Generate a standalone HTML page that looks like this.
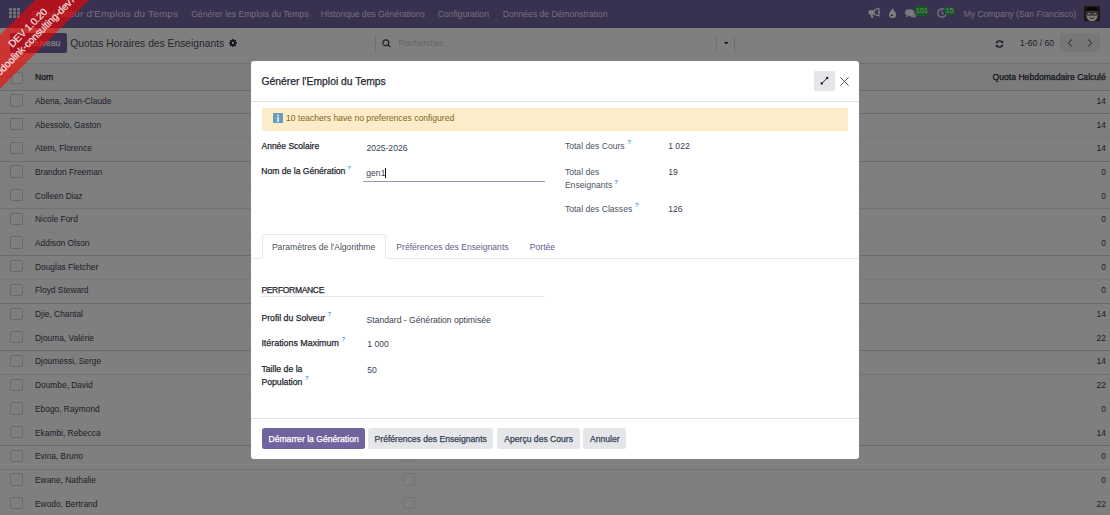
<!DOCTYPE html>
<html><head><meta charset="utf-8">
<style>
*{box-sizing:border-box;margin:0;padding:0}
html,body{width:1110px;height:515px;overflow:hidden;background:#fff}
body{font-family:"Liberation Sans",sans-serif;position:relative}
.t{position:absolute;white-space:nowrap}
.r{position:absolute}
</style></head><body>
<div class="r" style="left:0px;top:0px;width:1110.00px;height:28.00px;background:#71639e"></div>
<svg class="r" style="left:9px;top:7.8px" width="11" height="10.4" viewBox="0 0 11 10.4"><g fill="#ffffff" opacity=".85"><rect x="0" y="0.0" width="3" height="2.8" rx="0.4"/><rect x="4" y="0.0" width="3" height="2.8" rx="0.4"/><rect x="8" y="0.0" width="3" height="2.8" rx="0.4"/><rect x="0" y="3.6" width="3" height="2.8" rx="0.4"/><rect x="4" y="3.6" width="3" height="2.8" rx="0.4"/><rect x="8" y="3.6" width="3" height="2.8" rx="0.4"/><rect x="0" y="7.2" width="3" height="2.8" rx="0.4"/><rect x="4" y="7.2" width="3" height="2.8" rx="0.4"/><rect x="8" y="7.2" width="3" height="2.8" rx="0.4"/></g></svg>
<div class="t " style="left:31.50px;top:7.72px;font-size:9.8px;line-height:11.76px;color:#e4def2;letter-spacing:.25px">Générateur d'Emplois du Temps</div>
<div class="t " style="left:191.20px;top:8.66px;font-size:8.6px;line-height:10.32px;color:#e4def2;">Générer les Emplois du Temps</div>
<div class="t " style="left:320.80px;top:8.66px;font-size:8.6px;line-height:10.32px;color:#e4def2;">Historique des Générations</div>
<div class="t " style="left:437.80px;top:8.66px;font-size:8.6px;line-height:10.32px;color:#e4def2;">Configuration</div>
<div class="t " style="left:502.80px;top:8.66px;font-size:8.6px;line-height:10.32px;color:#e4def2;">Données de Démonstration</div>
<div class="t " style="left:963.70px;top:8.65px;font-size:8.5px;line-height:10.2px;color:#e4def2;">My Company (San Francisco)</div>
<svg class="r" style="left:867px;top:6px" width="14" height="14" viewBox="0 0 14 14"><rect x="1.6" y="4.2" width="5.2" height="4.4" rx=".6" fill="#fff"/><path d="M7.2 4.3L11.9 2.2V9.9L7.2 8.5z" fill="none" stroke="#fff" stroke-width="1.2" stroke-linejoin="round"/><path d="M3.4 8.4L4.4 12.1H6.2L5.6 8.4z" fill="#fff"/><circle cx="12.4" cy="6.3" r=".8" fill="#fff"/></svg>
<svg class="r" style="left:889.2px;top:7.9px" width="7.2" height="10.2" viewBox="0 0 7.2 10.2"><path d="M3.6 0C2.6 2.6 0 4.6 0 6.6A3.6 3.6 0 0 0 7.2 6.6C7.2 4.6 4.6 2.6 3.6 0z" fill="#fff"/><ellipse cx="2.9" cy="7.4" rx="1.1" ry=".8" fill="#3a3152"/></svg>
<svg class="r" style="left:905px;top:9px" width="12" height="9" viewBox="0 0 12 9"><ellipse cx="4.5" cy="3.5" rx="4.5" ry="3.3" fill="#fff" opacity=".9"/><path d="M1.5 6l-1 2.5 3-1.5z" fill="#fff" opacity=".9"/><ellipse cx="8" cy="5.5" rx="3.8" ry="2.8" fill="#fff" opacity=".75"/><path d="M10 7.5l1.5 1.5-3.5-.8z" fill="#fff" opacity=".75"/></svg>
<svg class="r" style="left:937px;top:8px" width="10" height="10" viewBox="0 0 10 10"><circle cx="5" cy="5" r="4.2" fill="none" stroke="#fff" stroke-width="1.2" opacity=".9"/><path d="M5 2.5V5.3L6.8 6.3" fill="none" stroke="#fff" stroke-width="1.1" opacity=".9"/></svg>
<div class="r" style="left:914px;top:6px;width:14.50px;height:9.80px;background:#2db04a;border-radius:5px"></div>
<div class="t " style="left:915.70px;top:7.19px;font-size:7.2px;line-height:8.64px;color:#fff;">101</div>
<div class="r" style="left:943.8px;top:6.8px;width:11.20px;height:8.10px;background:#2db04a;border-radius:4px"></div>
<div class="t " style="left:945.50px;top:6.69px;font-size:7.2px;line-height:8.64px;color:#fff;">15</div>
<svg class="r" style="left:1084px;top:6.3px" width="16" height="15.3" viewBox="0 0 16 15.3"><rect width="16" height="15.3" fill="#3a2a30"/><path d="M2 5.5Q1.8 15.3 8 15.3Q14.2 15.3 14 5.5z" fill="#fffbe6"/><path d="M2 6Q1.5 1 8 1.3Q14.5 1 14 6L12.5 4.6L3.5 4.6z" fill="#120c0c"/><rect x="3" y="6.2" width="4.2" height="2.8" fill="none" stroke="#1a1414" stroke-width=".9"/><rect x="8.8" y="6.2" width="4.2" height="2.8" fill="none" stroke="#1a1414" stroke-width=".9"/><path d="M5.5 11.8Q8 13.3 10.5 11.8" stroke="#4a3028" stroke-width=".8" fill="none"/></svg>
<div class="r" style="left:0px;top:28px;width:1110.00px;height:35.00px;background:#fff"></div>
<div class="r" style="left:10px;top:33px;width:57.00px;height:20.20px;background:#71639e;border-radius:2.5px"></div>
<div class="t " style="right:1049.80px;top:37.56px;font-size:8.6px;line-height:10.32px;-webkit-text-stroke:0.25px #fff;color:#fff;">Nouveau</div>
<div class="t " style="left:70.30px;top:37.65px;font-size:10.3px;line-height:12.36px;color:#4a4f57;">Quotas Horaires des Enseignants</div>
<svg class="r" style="left:229.2px;top:38.6px" width="8" height="8" viewBox="0 0 8 8"><g fill="#1f2937"><rect x="3.25" y="-.1" width="1.5" height="8.2" rx=".3" transform="rotate(0 4 4)"/><rect x="3.25" y="-.1" width="1.5" height="8.2" rx=".3" transform="rotate(45 4 4)"/><rect x="3.25" y="-.1" width="1.5" height="8.2" rx=".3" transform="rotate(90 4 4)"/><rect x="3.25" y="-.1" width="1.5" height="8.2" rx=".3" transform="rotate(135 4 4)"/><circle cx="4" cy="4" r="2.9"/></g><circle cx="4" cy="4" r="1.15" fill="#fff"/></svg>
<div class="r" style="left:375px;top:35.5px;width:360.00px;height:18.00px;border:1px solid #f5f6f7;border-left-color:#dcdee1;border-right-color:#dcdee1;border-radius:1px;background:#fff"></div>
<svg class="r" style="left:381.5px;top:39.2px" width="9.5" height="8.5" viewBox="0 0 10 9"><circle cx="4" cy="4" r="3.1" fill="none" stroke="#374151" stroke-width="1.3"/><path d="M6.2 6.2L8.8 8.6" stroke="#374151" stroke-width="1.4"/></svg>
<div class="t " style="left:398.50px;top:37.86px;font-size:8.6px;line-height:10.32px;color:#c6c9cd;">Rechercher...</div>
<div class="r" style="left:716.3px;top:36px;width:1.00px;height:17.00px;background:#e3e5e8"></div>
<svg class="r" style="left:723.8px;top:41.6px" width="4.4" height="2.6" viewBox="0 0 4.4 2.6"><path d="M0 0h4.4L2.2 2.6z" fill="#1f2937"/></svg>
<svg class="r" style="left:994.5px;top:39.5px" width="9" height="8" viewBox="0 0 9 8"><path d="M1.3 3.6A3.3 3.3 0 0 1 7.2 2.2" fill="none" stroke="#374151" stroke-width="1.4"/><path d="M8.2 .2v2.8H5.4z" fill="#374151"/><path d="M7.7 4.4A3.3 3.3 0 0 1 1.8 5.8" fill="none" stroke="#374151" stroke-width="1.4"/><path d="M.8 7.8V5h2.8z" fill="#374151"/></svg>
<div class="t " style="left:1020.10px;top:37.66px;font-size:8.6px;line-height:10.32px;color:#374151;">1-60 / 60</div>
<div class="r" style="left:1060px;top:32.7px;width:40.00px;height:19.60px;background:#eceef1;border-radius:2px"></div>
<svg class="r" style="left:1066.5px;top:38.5px" width="6" height="8" viewBox="0 0 6 8"><path d="M5 .5L1.3 4 5 7.5" fill="none" stroke="#374151" stroke-width="1"/></svg>
<svg class="r" style="left:1087px;top:38.5px" width="6" height="8" viewBox="0 0 6 8"><path d="M1 .5L4.7 4 1 7.5" fill="none" stroke="#374151" stroke-width="1"/></svg>
<div class="r" style="left:0px;top:63px;width:1110.00px;height:26.50px;background:rgba(0,0,0,.025)"></div>
<div class="r" style="left:0px;top:62.5px;width:1110.00px;height:1.00px;background:rgba(0,0,0,.08)"></div>
<div class="r" style="left:0px;top:89.5px;width:1110.00px;height:1.00px;background:rgba(0,0,0,.17)"></div>
<div class="r" style="left:10.5px;top:72.2px;width:12.30px;height:12.30px;border:1px solid #ced4da;border-radius:2px;background:#fff"></div>
<div class="t " style="left:35.00px;top:71.66px;font-size:8.6px;line-height:10.32px;-webkit-text-stroke:0.25px #1f2937;color:#1f2937;">Nom</div>
<div class="t " style="right:4.20px;top:71.66px;font-size:8.6px;line-height:10.32px;-webkit-text-stroke:0.25px #1f2937;color:#1f2937;">Quota Hebdomadaire Calculé</div>
<div class="r" style="left:0px;top:113.19px;width:1110.00px;height:1.00px;background:rgba(0,0,0,0.153)"></div>
<div class="r" style="left:10.3px;top:94.3px;width:12.30px;height:12.30px;border:1px solid #ced4da;border-radius:2px;background:#fff"></div>
<div class="r" style="left:402.5px;top:94.3px;width:12.30px;height:12.30px;border:1px solid #e3e5e8;border-radius:2px;background:#fff"></div>
<div class="t " style="left:35.00px;top:95.85px;font-size:8.4px;line-height:10.08px;color:#374151;">Abena, Jean-Claude</div>
<div class="t " style="right:4.20px;top:95.85px;font-size:8.4px;line-height:10.08px;color:#374151;">14</div>
<div class="r" style="left:0px;top:136.88px;width:1110.00px;height:1.00px;background:rgba(0,0,0,0.059)"></div>
<div class="r" style="left:10.3px;top:117.99px;width:12.30px;height:12.30px;border:1px solid #ced4da;border-radius:2px;background:#fff"></div>
<div class="r" style="left:402.5px;top:117.99px;width:12.30px;height:12.30px;border:1px solid #e3e5e8;border-radius:2px;background:#fff"></div>
<div class="t " style="left:35.00px;top:119.54px;font-size:8.4px;line-height:10.08px;color:#374151;">Abessolo, Gaston</div>
<div class="t " style="right:4.20px;top:119.54px;font-size:8.4px;line-height:10.08px;color:#374151;">14</div>
<div class="r" style="left:0px;top:160.57px;width:1110.00px;height:1.00px;background:rgba(0,0,0,0.153)"></div>
<div class="r" style="left:10.3px;top:141.68px;width:12.30px;height:12.30px;border:1px solid #ced4da;border-radius:2px;background:#fff"></div>
<div class="r" style="left:402.5px;top:141.68px;width:12.30px;height:12.30px;border:1px solid #e3e5e8;border-radius:2px;background:#fff"></div>
<div class="t " style="left:35.00px;top:143.23px;font-size:8.4px;line-height:10.08px;color:#374151;">Atem, Florence</div>
<div class="t " style="right:4.20px;top:143.23px;font-size:8.4px;line-height:10.08px;color:#374151;">14</div>
<div class="r" style="left:0px;top:184.26px;width:1110.00px;height:1.00px;background:rgba(0,0,0,0.026)"></div>
<div class="r" style="left:10.3px;top:165.37px;width:12.30px;height:12.30px;border:1px solid #ced4da;border-radius:2px;background:#fff"></div>
<div class="r" style="left:402.5px;top:165.37px;width:12.30px;height:12.30px;border:1px solid #e3e5e8;border-radius:2px;background:#fff"></div>
<div class="t " style="left:35.00px;top:166.92px;font-size:8.4px;line-height:10.08px;color:#374151;">Brandon Freeman</div>
<div class="t " style="right:4.20px;top:166.92px;font-size:8.4px;line-height:10.08px;color:#374151;">0</div>
<div class="r" style="left:0px;top:207.95px;width:1110.00px;height:1.00px;background:rgba(0,0,0,0.102)"></div>
<div class="r" style="left:10.3px;top:189.06px;width:12.30px;height:12.30px;border:1px solid #ced4da;border-radius:2px;background:#fff"></div>
<div class="r" style="left:402.5px;top:189.06px;width:12.30px;height:12.30px;border:1px solid #e3e5e8;border-radius:2px;background:#fff"></div>
<div class="t " style="left:35.00px;top:190.61px;font-size:8.4px;line-height:10.08px;color:#374151;">Colleen Diaz</div>
<div class="t " style="right:4.20px;top:190.61px;font-size:8.4px;line-height:10.08px;color:#374151;">0</div>
<div class="r" style="left:0px;top:231.64px;width:1110.00px;height:1.00px;background:rgba(0,0,0,0.026)"></div>
<div class="r" style="left:10.3px;top:212.75px;width:12.30px;height:12.30px;border:1px solid #ced4da;border-radius:2px;background:#fff"></div>
<div class="r" style="left:402.5px;top:212.75px;width:12.30px;height:12.30px;border:1px solid #e3e5e8;border-radius:2px;background:#fff"></div>
<div class="t " style="left:35.00px;top:214.30px;font-size:8.4px;line-height:10.08px;color:#374151;">Nicole Ford</div>
<div class="t " style="right:4.20px;top:214.30px;font-size:8.4px;line-height:10.08px;color:#374151;">0</div>
<div class="r" style="left:0px;top:255.33px;width:1110.00px;height:1.00px;background:rgba(0,0,0,0.153)"></div>
<div class="r" style="left:10.3px;top:236.44px;width:12.30px;height:12.30px;border:1px solid #ced4da;border-radius:2px;background:#fff"></div>
<div class="r" style="left:402.5px;top:236.44px;width:12.30px;height:12.30px;border:1px solid #e3e5e8;border-radius:2px;background:#fff"></div>
<div class="t " style="left:35.00px;top:237.99px;font-size:8.4px;line-height:10.08px;color:#374151;">Addison Olson</div>
<div class="t " style="right:4.20px;top:237.99px;font-size:8.4px;line-height:10.08px;color:#374151;">0</div>
<div class="r" style="left:0px;top:279.02px;width:1110.00px;height:1.00px;background:rgba(0,0,0,0.051)"></div>
<div class="r" style="left:10.3px;top:260.13px;width:12.30px;height:12.30px;border:1px solid #ced4da;border-radius:2px;background:#fff"></div>
<div class="r" style="left:402.5px;top:260.13px;width:12.30px;height:12.30px;border:1px solid #e3e5e8;border-radius:2px;background:#fff"></div>
<div class="t " style="left:35.00px;top:261.68px;font-size:8.4px;line-height:10.08px;color:#374151;">Douglas Fletcher</div>
<div class="t " style="right:4.20px;top:261.68px;font-size:8.4px;line-height:10.08px;color:#374151;">0</div>
<div class="r" style="left:0px;top:302.71px;width:1110.00px;height:1.00px;background:rgba(0,0,0,0.170)"></div>
<div class="r" style="left:10.3px;top:283.82px;width:12.30px;height:12.30px;border:1px solid #ced4da;border-radius:2px;background:#fff"></div>
<div class="r" style="left:402.5px;top:283.82px;width:12.30px;height:12.30px;border:1px solid #e3e5e8;border-radius:2px;background:#fff"></div>
<div class="t " style="left:35.00px;top:285.37px;font-size:8.4px;line-height:10.08px;color:#374151;">Floyd Steward</div>
<div class="t " style="right:4.20px;top:285.37px;font-size:8.4px;line-height:10.08px;color:#374151;">0</div>
<div class="r" style="left:0px;top:326.4px;width:1110.00px;height:1.00px;background:rgba(0,0,0,0.026)"></div>
<div class="r" style="left:10.3px;top:307.51px;width:12.30px;height:12.30px;border:1px solid #ced4da;border-radius:2px;background:#fff"></div>
<div class="r" style="left:402.5px;top:307.51px;width:12.30px;height:12.30px;border:1px solid #e3e5e8;border-radius:2px;background:#fff"></div>
<div class="t " style="left:35.00px;top:309.06px;font-size:8.4px;line-height:10.08px;color:#374151;">Djie, Chantal</div>
<div class="t " style="right:4.20px;top:309.06px;font-size:8.4px;line-height:10.08px;color:#374151;">14</div>
<div class="r" style="left:0px;top:350.09px;width:1110.00px;height:1.00px;background:rgba(0,0,0,0.153)"></div>
<div class="r" style="left:10.3px;top:331.2px;width:12.30px;height:12.30px;border:1px solid #ced4da;border-radius:2px;background:#fff"></div>
<div class="r" style="left:402.5px;top:331.2px;width:12.30px;height:12.30px;border:1px solid #e3e5e8;border-radius:2px;background:#fff"></div>
<div class="t " style="left:35.00px;top:332.75px;font-size:8.4px;line-height:10.08px;color:#374151;">Djouma, Valérie</div>
<div class="t " style="right:4.20px;top:332.75px;font-size:8.4px;line-height:10.08px;color:#374151;">22</div>
<div class="r" style="left:0px;top:373.78px;width:1110.00px;height:1.00px;background:rgba(0,0,0,0.102)"></div>
<div class="r" style="left:10.3px;top:354.89px;width:12.30px;height:12.30px;border:1px solid #ced4da;border-radius:2px;background:#fff"></div>
<div class="r" style="left:402.5px;top:354.89px;width:12.30px;height:12.30px;border:1px solid #e3e5e8;border-radius:2px;background:#fff"></div>
<div class="t " style="left:35.00px;top:356.44px;font-size:8.4px;line-height:10.08px;color:#374151;">Djoumessi, Serge</div>
<div class="t " style="right:4.20px;top:356.44px;font-size:8.4px;line-height:10.08px;color:#374151;">14</div>
<div class="r" style="left:0px;top:397.47px;width:1110.00px;height:1.00px;background:rgba(0,0,0,0.026)"></div>
<div class="r" style="left:10.3px;top:378.58px;width:12.30px;height:12.30px;border:1px solid #ced4da;border-radius:2px;background:#fff"></div>
<div class="r" style="left:402.5px;top:378.58px;width:12.30px;height:12.30px;border:1px solid #e3e5e8;border-radius:2px;background:#fff"></div>
<div class="t " style="left:35.00px;top:380.13px;font-size:8.4px;line-height:10.08px;color:#374151;">Doumbe, David</div>
<div class="t " style="right:4.20px;top:380.13px;font-size:8.4px;line-height:10.08px;color:#374151;">22</div>
<div class="r" style="left:0px;top:421.16px;width:1110.00px;height:1.00px;background:rgba(0,0,0,0.026)"></div>
<div class="r" style="left:10.3px;top:402.27px;width:12.30px;height:12.30px;border:1px solid #ced4da;border-radius:2px;background:#fff"></div>
<div class="r" style="left:402.5px;top:402.27px;width:12.30px;height:12.30px;border:1px solid #e3e5e8;border-radius:2px;background:#fff"></div>
<div class="t " style="left:35.00px;top:403.82px;font-size:8.4px;line-height:10.08px;color:#374151;">Ebogo, Raymond</div>
<div class="t " style="right:4.20px;top:403.82px;font-size:8.4px;line-height:10.08px;color:#374151;">0</div>
<div class="r" style="left:0px;top:444.85px;width:1110.00px;height:1.00px;background:rgba(0,0,0,0.170)"></div>
<div class="r" style="left:10.3px;top:425.96px;width:12.30px;height:12.30px;border:1px solid #ced4da;border-radius:2px;background:#fff"></div>
<div class="r" style="left:402.5px;top:425.96px;width:12.30px;height:12.30px;border:1px solid #e3e5e8;border-radius:2px;background:#fff"></div>
<div class="t " style="left:35.00px;top:427.51px;font-size:8.4px;line-height:10.08px;color:#374151;">Ekambi, Rebecca</div>
<div class="t " style="right:4.20px;top:427.51px;font-size:8.4px;line-height:10.08px;color:#374151;">14</div>
<div class="r" style="left:0px;top:468.54px;width:1110.00px;height:1.00px;background:rgba(0,0,0,0.119)"></div>
<div class="r" style="left:10.3px;top:449.65px;width:12.30px;height:12.30px;border:1px solid #ced4da;border-radius:2px;background:#fff"></div>
<div class="r" style="left:402.5px;top:449.65px;width:12.30px;height:12.30px;border:1px solid #e3e5e8;border-radius:2px;background:#fff"></div>
<div class="t " style="left:35.00px;top:451.20px;font-size:8.4px;line-height:10.08px;color:#374151;">Evina, Bruno</div>
<div class="t " style="right:4.20px;top:451.20px;font-size:8.4px;line-height:10.08px;color:#374151;">0</div>
<div class="r" style="left:0px;top:492.23px;width:1110.00px;height:1.00px;background:rgba(0,0,0,0.026)"></div>
<div class="r" style="left:10.3px;top:473.34px;width:12.30px;height:12.30px;border:1px solid #ced4da;border-radius:2px;background:#fff"></div>
<div class="r" style="left:402.5px;top:473.34px;width:12.30px;height:12.30px;border:1px solid #e3e5e8;border-radius:2px;background:#fff"></div>
<div class="t " style="left:35.00px;top:474.89px;font-size:8.4px;line-height:10.08px;color:#374151;">Ewane, Nathalie</div>
<div class="t " style="right:4.20px;top:474.89px;font-size:8.4px;line-height:10.08px;color:#374151;">0</div>
<div class="r" style="left:0px;top:515.92px;width:1110.00px;height:1.00px;background:rgba(0,0,0,0.170)"></div>
<div class="r" style="left:10.3px;top:497.03px;width:12.30px;height:12.30px;border:1px solid #ced4da;border-radius:2px;background:#fff"></div>
<div class="r" style="left:402.5px;top:497.03px;width:12.30px;height:12.30px;border:1px solid #e3e5e8;border-radius:2px;background:#fff"></div>
<div class="t " style="left:35.00px;top:498.58px;font-size:8.4px;line-height:10.08px;color:#374151;">Ewodo, Bertrand</div>
<div class="t " style="right:4.20px;top:498.58px;font-size:8.4px;line-height:10.08px;color:#374151;">22</div>
<div class="r" style="left:0px;top:0px;width:1110.00px;height:515.00px;background:rgba(0,0,0,.5)"></div>
<div class="r" style="left:251px;top:61px;width:608.00px;height:398.00px;background:#fff;border-radius:3px"></div>
<div class="t " style="left:261.50px;top:75.60px;font-size:10.35px;line-height:12.42px;color:#222831;-webkit-text-stroke:.25px #222831">Générer l'Emploi du Temps</div>
<div class="r" style="left:814.3px;top:70.7px;width:20.70px;height:20.10px;background:#e4e6e9;border-radius:1px"></div>
<svg class="r" style="left:819px;top:75px" width="11" height="11" viewBox="0 0 11 11"><path d="M2.7 8.5L8.2 3" stroke="#111" stroke-width=".9"/><circle cx="2.7" cy="8.5" r="1.15" fill="#111"/><circle cx="8.2" cy="3" r="1.15" fill="#111"/></svg>
<svg class="r" style="left:839.6px;top:76.8px" width="9" height="9" viewBox="0 0 9 9"><path d="M.4 .4L8.6 8.6M8.6 .4L.4 8.6" stroke="#4b4b4b" stroke-width=".95"/></svg>
<div class="r" style="left:251px;top:101px;width:608.00px;height:1.00px;background:#dee2e6"></div>
<div class="r" style="left:261.5px;top:107.9px;width:586.50px;height:22.80px;background:#fdecc9;border-radius:1.5px"></div>
<svg class="r" style="left:273px;top:113px" width="10" height="10.3" viewBox="0 0 10 10.3"><rect width="10" height="10.3" rx="1" fill="#6b9dc0"/><rect x="4.2" y="1.7" width="1.6" height="1.5" fill="#e6f4ff"/><rect x="4.2" y="4" width="1.6" height="5" fill="#e6f4ff"/></svg>
<div class="t " style="left:286.10px;top:113.06px;font-size:8.6px;line-height:10.32px;color:#80661c;">10 teachers have no preferences configured</div>
<div class="t " style="left:261.50px;top:140.95px;font-size:8.5px;line-height:10.2px;-webkit-text-stroke:0.25px #262a30;color:#262a30;">Année Scolaire</div>
<div class="t " style="left:366.40px;top:142.76px;font-size:8.6px;line-height:10.32px;color:#374151;">2025-2026</div>
<div class="t " style="left:261.30px;top:166.46px;font-size:8.6px;line-height:10.32px;-webkit-text-stroke:0.25px #262a30;color:#262a30;">Nom de la Génération</div>
<div class="t " style="left:347.30px;top:164.82px;font-size:6px;line-height:7.2px;font-weight:700;color:#3a9fc4;">?</div>
<div class="t " style="left:366.30px;top:168.16px;font-size:8.6px;line-height:10.32px;color:#374151;">gen1</div>
<div class="r" style="left:385px;top:168px;width:0.80px;height:10.00px;background:#111"></div>
<div class="r" style="left:363.2px;top:180.6px;width:181.80px;height:1.00px;background:#9b96bc"></div>
<div class="t " style="left:564.90px;top:140.76px;font-size:8.6px;line-height:10.32px;color:#4b5563;">Total des Cours</div>
<div class="t " style="left:627.30px;top:138.82px;font-size:6px;line-height:7.2px;font-weight:700;color:#3a9fc4;">?</div>
<div class="t " style="left:668.20px;top:140.76px;font-size:8.6px;line-height:10.32px;color:#374151;">1 022</div>
<div class="t " style="left:564.90px;top:166.56px;font-size:8.6px;line-height:10.32px;color:#4b5563;">Total des</div>
<div class="t " style="left:564.90px;top:179.86px;font-size:8.6px;line-height:10.32px;color:#4b5563;">Enseignants</div>
<div class="t " style="left:614.30px;top:178.52px;font-size:6px;line-height:7.2px;font-weight:700;color:#3a9fc4;">?</div>
<div class="t " style="left:668.20px;top:166.56px;font-size:8.6px;line-height:10.32px;color:#374151;">19</div>
<div class="t " style="left:564.90px;top:203.86px;font-size:8.6px;line-height:10.32px;color:#4b5563;">Total des Classes</div>
<div class="t " style="left:635.00px;top:202.32px;font-size:6px;line-height:7.2px;font-weight:700;color:#3a9fc4;">?</div>
<div class="t " style="left:668.20px;top:203.86px;font-size:8.6px;line-height:10.32px;color:#374151;">126</div>
<div class="r" style="left:251px;top:257.7px;width:608.00px;height:1.00px;background:#e6e8eb"></div>
<div class="r" style="left:261.8px;top:234px;width:124.70px;height:24.70px;background:#fff;border:1px solid #e6e8eb;border-bottom:none;border-radius:3px 3px 0 0"></div>
<div class="t " style="left:271.90px;top:241.56px;font-size:8.6px;line-height:10.32px;color:#495057;">Paramètres de l'Algorithme</div>
<div class="t " style="left:396.30px;top:241.56px;font-size:8.6px;line-height:10.32px;color:#635d88;">Préférences des Enseignants</div>
<div class="t " style="left:529.80px;top:241.56px;font-size:8.6px;line-height:10.32px;color:#635d88;">Portée</div>
<div class="t " style="left:261.40px;top:284.65px;font-size:8.5px;line-height:10.2px;-webkit-text-stroke:0.25px #262a30;color:#262a30;letter-spacing:-.32px">PERFORMANCE</div>
<div class="r" style="left:261px;top:296px;width:284.00px;height:1.00px;background:#e5e7eb"></div>
<div class="t " style="left:261.40px;top:313.07px;font-size:8.7px;line-height:10.44px;-webkit-text-stroke:0.25px #262a30;color:#262a30;">Profil du Solveur</div>
<div class="t " style="left:327.60px;top:311.32px;font-size:6px;line-height:7.2px;font-weight:700;color:#3a9fc4;">?</div>
<div class="t " style="left:366.60px;top:314.86px;font-size:8.6px;line-height:10.32px;color:#374151;">Standard - Génération optimisée</div>
<div class="t " style="left:261.40px;top:338.08px;font-size:8.9px;line-height:10.68px;-webkit-text-stroke:0.25px #262a30;color:#262a30;">Itérations Maximum</div>
<div class="t " style="left:341.50px;top:336.32px;font-size:6px;line-height:7.2px;font-weight:700;color:#3a9fc4;">?</div>
<div class="t " style="left:367.30px;top:339.06px;font-size:8.6px;line-height:10.32px;color:#374151;">1 000</div>
<div class="t " style="left:261.40px;top:363.77px;font-size:8.7px;line-height:10.44px;-webkit-text-stroke:0.25px #262a30;color:#262a30;">Taille de la</div>
<div class="t " style="left:261.40px;top:376.67px;font-size:8.7px;line-height:10.44px;-webkit-text-stroke:0.25px #262a30;color:#262a30;">Population</div>
<div class="t " style="left:305.00px;top:374.82px;font-size:6px;line-height:7.2px;font-weight:700;color:#3a9fc4;">?</div>
<div class="t " style="left:367.30px;top:364.56px;font-size:8.6px;line-height:10.32px;color:#374151;">50</div>
<div class="r" style="left:251px;top:418px;width:608.00px;height:1.00px;background:#dee2e6"></div>
<div class="r" style="left:261.8px;top:428.2px;width:103.60px;height:20.60px;background:#71639e;border-radius:2.5px"></div><div class="t" style="left:261.8px;width:103.60px;top:433.70px;font-size:8.6px;line-height:10.32px;-webkit-text-stroke:.25px #fff;color:#fff;text-align:center">Démarrer la Génération</div>
<div class="r" style="left:368px;top:428.2px;width:125.40px;height:20.60px;background:#e4e6e9;border-radius:2.5px"></div><div class="t" style="left:368px;width:125.40px;top:433.70px;font-size:8.6px;line-height:10.32px;-webkit-text-stroke:.25px #374151;color:#374151;text-align:center">Préférences des Enseignants</div>
<div class="r" style="left:497.2px;top:428.2px;width:82.90px;height:20.60px;background:#e4e6e9;border-radius:2.5px"></div><div class="t" style="left:497.2px;width:82.90px;top:433.70px;font-size:8.6px;line-height:10.32px;-webkit-text-stroke:.25px #374151;color:#374151;text-align:center">Aperçu des Cours</div>
<div class="r" style="left:583.3px;top:428.2px;width:43.10px;height:20.60px;background:#e4e6e9;border-radius:2.5px"></div><div class="t" style="left:583.3px;width:43.10px;top:433.70px;font-size:8.6px;line-height:10.32px;-webkit-text-stroke:.25px #374151;color:#374151;text-align:center">Annuler</div>
<div class="r" style="left:-53.55px;top:12.349999999999998px;width:170px;height:38.2px;background:rgba(255,0,0,.6);transform:rotate(-45deg);"><div class="t" style="left:0;width:170px;top:9.0px;text-align:center;font-size:10.2px;line-height:11.3px;letter-spacing:-.2px;color:#fff;opacity:.88;-webkit-text-stroke:.15px #fff">DEV 1.0.20<br>odoolink-consulting-dev7</div></div>
</body></html>
